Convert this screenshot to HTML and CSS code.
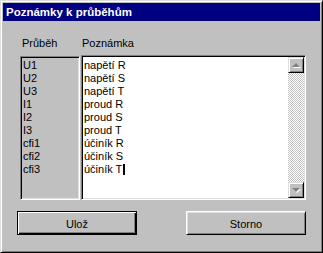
FILE: index.html
```html
<!DOCTYPE html>
<html lang="cs">
<head>
    <meta charset="UTF-8">
    <title>Poznámky k průběhům</title>
    <link rel="stylesheet" href="styles.css">
</head>
<body>

<div class="dlg">
    <div class="dlg_title">Poznámky k průběhům</div>

    <div class="dlg_body">
        <div class="fields">
            <div class="col_left">
                <div class="lbl lbl_left">Průběh</div>
                <div class="list_box">
                    <div>U1</div>
                    <div>U2</div>
                    <div>U3</div>
                    <div>I1</div>
                    <div>I2</div>
                    <div>I3</div>
                    <div>cfi1</div>
                    <div>cfi2</div>
                    <div>cfi3</div>
                </div>
            </div>

            <div class="col_right">
                <div class="lbl lbl_right">Poznámka</div>
                <div class="memo_box">
                    <div class="memo_text">
                        <div>napětí R</div>
                        <div>napětí S</div>
                        <div>napětí T</div>
                        <div>proud R</div>
                        <div>proud S</div>
                        <div>proud T</div>
                        <div>účiník R</div>
                        <div>účiník S</div>
                        <div>účiník T<span class="caret"></span></div>
                    </div>
                    <!--svislý posuvník, neaktivní-->
                    <div class="vscroll">
                        <div class="sb_btn"><span class="arr arr_up"></span></div>
                        <div class="sb_track"></div>
                        <div class="sb_btn"><span class="arr arr_down"></span></div>
                    </div>
                </div>
            </div>
        </div>

        <div class="buttons">
            <div class="btn btn_default">Ulož</div>
            <div class="btn">Storno</div>
        </div>
    </div>
</div>

</body>
</html>
```

FILE: styles.css
```css
*{
    margin: 0px;
    padding: 0px;
    box-sizing: border-box;
}
body{
    background-color: #c0c0c0;
    font-family: "Liberation Sans", Arial, sans-serif;
    font-size: 11px;
    color: #000000;
}

.dlg{
    width: 323px;
    height: 253px;
    background-color: #c0c0c0;
    border: 1px solid;
    border-color: #dfdfdf #000000 #000000 #dfdfdf;
    box-shadow: inset 1px 1px #ffffff, inset -1px -1px #808080;
    padding: 2px;
}

.dlg_title{
    height: 18px;
    line-height: 18px;
    background-color: #000080;
    color: #ffffff;
    font-weight: bold;
    font-size: 11.5px;
    padding-left: 3px;
}

.dlg_body{
    padding-top: 16px;
}

.fields{
    display: flex;
    gap: 1px;
    padding-left: 17px;
}

.lbl{
    height: 18px;
    line-height: 13px;
}
.lbl_left{
    padding-left: 2px;
}
.lbl_right{
    padding-left: 1px;
}

.col_left{
    width: 60px;
}
.col_right{
    width: 225px;
}

/*zapuštěný rámeček*/
.list_box, .memo_box{
    border: 1px solid;
    border-color: #808080 #ffffff #ffffff #808080;
    box-shadow: inset 1px 1px #000000, inset -1px -1px #dfdfdf;
}

.list_box{
    margin-top: 1px;
    height: 144px;
    padding: 2px 0 0 2px;
    line-height: 13px;
    background-color: #c0c0c0;
}

.memo_box{
    height: 145px;
    background-color: #ffffff;
    display: flex;
    padding: 1px;
}

.memo_text{
    flex: 1;
    padding: 2px 0 0 1px;
    line-height: 13px;
}

.caret{
    display: inline-block;
    width: 2px;
    height: 11px;
    background-color: #000000;
    margin-left: 1px;
    vertical-align: -2px;
}

.vscroll{
    width: 16px;
    display: flex;
    flex-direction: column;
}

.sb_btn{
    height: 16px;
    background-color: #c0c0c0;
    border: 1px solid;
    border-color: #dfdfdf #000000 #000000 #dfdfdf;
    box-shadow: inset 1px 1px #ffffff, inset -1px -1px #808080;
    display: flex;
    align-items: center;
    justify-content: center;
}

.sb_track{
    flex: 1;
    background: repeating-conic-gradient(#c0c0c0 0 25%, #ffffff 0 50%) 0 0 / 2px 2px;
}

.arr{
    width: 0;
    height: 0;
    border-left: 4px solid transparent;
    border-right: 4px solid transparent;
}
.arr_up{
    border-bottom: 4px solid #808080;
    filter: drop-shadow(1px 1px 0 #ffffff);
}
.arr_down{
    border-top: 4px solid #808080;
    filter: drop-shadow(1px 1px 0 #ffffff);
}

.buttons{
    display: flex;
    gap: 49px;
    padding-left: 14px;
    margin-top: 11px;
}

.btn{
    width: 120px;
    height: 24px;
    display: flex;
    align-items: center;
    justify-content: center;
    border: 1px solid;
    border-color: #ffffff #000000 #000000 #ffffff;
    box-shadow: inset 1px 1px #dfdfdf, inset -1px -1px #808080;
    padding-top: 1px;
}

/*výchozí tlačítko má černý rámeček navíc*/
.btn_default{
    border-color: #000000;
    box-shadow: inset 1px 1px #ffffff, inset -1px -1px #000000, inset -2px -2px #808080;
}
```
